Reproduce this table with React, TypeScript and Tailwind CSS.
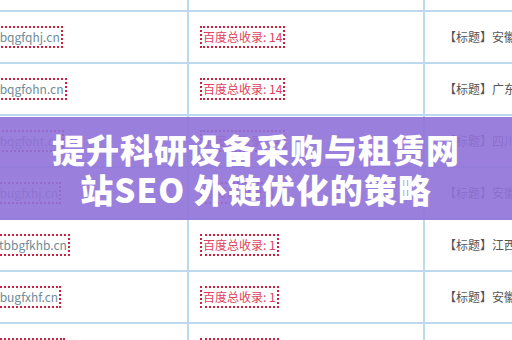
import React from 'react';

const rows = [
  { domain: 'www.bqgfqhj.cn', count: 14, title: '【标题】安徽新能源科技有限公司' },
  { domain: 'www.bqgfohn.cn', count: 14, title: '【标题】广东汽车配件有限公司' },
  { domain: 'www.bqgfoht.cn', count: 14, title: '【标题】四川天然气设备有限公司' },
  { domain: 'www.bugfxhj.cn', count: 1, title: '【标题】安徽服装贸易有限公司' },
  { domain: 'www.tbbgfkhb.cn', count: 1, title: '【标题】江西铁路器材有限公司' },
  { domain: 'www.bugfxhf.cn', count: 1, title: '【标题】安徽钢铁制品有限公司' },
  { domain: 'www.bugfxhk.cn', count: 1, title: '【标题】安徽钢结构有限公司' },
];

const font = { fontFamily: '"Microsoft YaHei", "Noto Sans CJK SC", sans-serif' };

const App = () => {
  return (
    <div className="relative w-[512px] h-[340px] overflow-hidden bg-white" style={font}>
      {/* 表格 */}
      <div className="flex flex-col">
        <div className="flex h-[12px] border-b-2 border-[#bcd9ee]">
          <div className="w-[189px] border-r-2 border-[#bcd9ee]"></div>
          <div className="w-[236px] border-r-2 border-[#bcd9ee]"></div>
          <div className="flex-1"></div>
        </div>
        {rows.map((r, i) => (
          <div key={i} className="flex h-[52px] shrink-0 border-b-2 border-[#bcd9ee]">
            <div className="w-[189px] flex items-center border-r-2 border-[#bcd9ee]">
              <span className="-ml-[35px] px-[1px] border-2 border-dotted border-[#c8233e] text-[12px] leading-[18px] text-[#6f8c98] whitespace-nowrap">
                {r.domain}
              </span>
            </div>
            <div className="w-[236px] flex items-center pl-[11px] border-r-2 border-[#bcd9ee]">
              <span className="px-[1px] border-2 border-dotted border-[#c8233e] text-[12px] leading-[18px] text-[#e0435c] whitespace-nowrap">
                百度总收录: {r.count}
              </span>
            </div>
            <div className="flex-1 flex items-center pl-[19px] overflow-hidden">
              <span className="text-[12px] text-[#555] whitespace-nowrap">{r.title}</span>
            </div>
          </div>
        ))}
      </div>

      {/* 标题横幅 */}
      <div className="absolute left-0 right-0 top-[117px] h-[103px] bg-[#8f72d8]/90 flex flex-col items-center justify-center">
        <div className="text-white font-black text-[33px] leading-[40px] tracking-[1px] text-center">
          提升科研设备采购与租赁网
          <br />
          站SEO 外链优化的策略
        </div>
      </div>
    </div>
  );
};

export default App;
